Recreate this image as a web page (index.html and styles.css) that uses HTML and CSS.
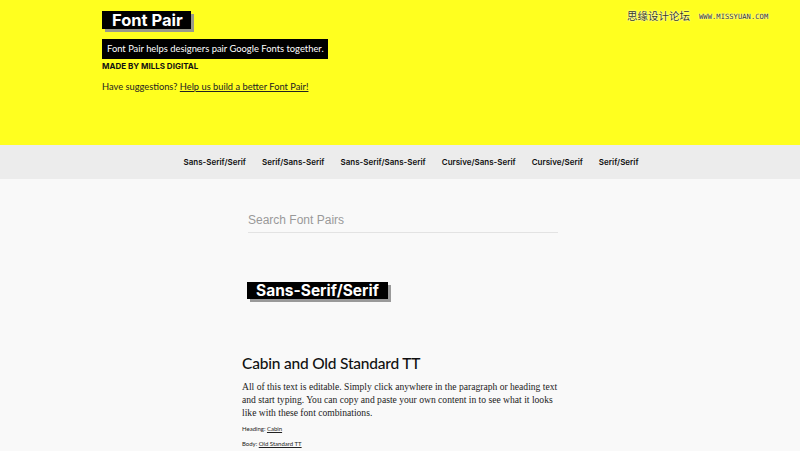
FILE: index.html
```html
<!DOCTYPE html>
<html>
<head>
<meta charset="utf-8">
<link rel="stylesheet" href="styles.css">
</head>
<body>
<header class="hero">
  <div class="hero-inner">
    <h1 class="logo">Font Pair</h1>
    <p class="tagline">Font Pair helps designers pair Google Fonts together.</p>
    <p class="byline">MADE BY MILLS DIGITAL</p>
    <p class="suggest">Have suggestions? <a href="#">Help us build a better Font Pair!</a></p>
  </div>
  <div class="watermark"><span class="wm-cn">思缘设计论坛</span><span class="wm-en">WWW.MISSYUAN.COM</span></div>
</header>
<nav class="nav">
  <a href="#">Sans-Serif/Serif</a>
  <a href="#">Serif/Sans-Serif</a>
  <a href="#">Sans-Serif/Sans-Serif</a>
  <a href="#">Cursive/Sans-Serif</a>
  <a href="#">Cursive/Serif</a>
  <a href="#">Serif/Serif</a>
</nav>
<main class="main">
  <div class="search"><input class="search-input" type="text" placeholder="Search Font Pairs"></div>
  <h2 class="section-title">Sans-Serif/Serif</h2>
  <article class="pair">
    <h3 class="pair-title">Cabin and Old Standard TT</h3>
    <p class="pair-body">All of this text is editable. Simply click anywhere in the paragraph or heading text and start typing. You can copy and paste your own content in to see what it looks like with these font combinations.</p>
    <p class="pair-meta">Heading: <a href="#">Cabin</a></p>
    <p class="pair-meta">Body: <a href="#">Old Standard TT</a></p>
  </article>
</main>
</body>
</html>
```
FILE: styles.css
```css
* { box-sizing: border-box; }
html, body { margin: 0; padding: 0; }
body {
  background: #f9f9f9;
  font-family: Lato, "Open Sans", "Liberation Sans", sans-serif;
  color: #111;
  overflow: hidden;
}
.hero {
  background: #ffff1f;
  height: 145px;
  position: relative;
}
.hero-inner {
  padding: 11px 0 0 102px;
  display: flex;
  flex-direction: column;
  align-items: flex-start;
}
.logo {
  margin: 0;
  background: #000;
  color: #fff;
  font-family: Inter, "DejaVu Sans", sans-serif;
  font-weight: 700;
  font-size: 16.5px;
  line-height: 18px;
  padding: 0 8px 0 10px;
  box-shadow: 3px 3px 0 #9a9a8a;
}
.tagline {
  margin: 10px 0 0;
  background: #000;
  color: #fff;
  font-size: 9.4px;
  line-height: 20px;
  padding: 0 4px 0 5px;
}
.byline {
  margin: 1px 0 0;
  font-family: Inter, "DejaVu Sans", sans-serif;
  font-weight: 700;
  font-size: 8px;
  line-height: 12px;
  color: #111;
}
.suggest {
  margin: 9px 0 0;
  font-size: 9.3px;
  line-height: 12px;
  color: #222;
}
.suggest a { color: #222; }
.watermark {
  position: absolute;
  top: 9px;
  left: 627px;
  display: flex;
  align-items: center;
  gap: 9px;
  color: #3a3a10;
  text-shadow: 0 0 2px #fff, 0 0 1px #fff;
}
.wm-cn { font-family: "Noto Sans CJK SC", sans-serif; font-size: 10.5px; line-height: 14px; }
.wm-en { font-family: "DejaVu Sans Mono", monospace; font-size: 7.2px; letter-spacing: 0; }
.nav {
  background: #ececec;
  height: 34px;
  display: flex;
  justify-content: center;
  align-items: center;
  gap: 16px;
  padding-left: 22px;
}
.nav a {
  font-family: Inter, "DejaVu Sans", sans-serif;
  font-weight: 600;
  font-size: 8px;
  color: #111;
  text-decoration: none;
}
.main {
  width: 316px;
  margin: 0 auto;
  padding-top: 29px;
}
.search { padding-left: 6px; }
.search-input {
  width: 100%;
  border: 0;
  border-bottom: 1px solid #e3e3e3;
  background: transparent;
  font-family: "Liberation Sans", Arial, sans-serif;
  font-size: 12px;
  padding: 4px 0 5px;
  margin: 0;
  outline: none;
}
.search-input::placeholder { color: #999; }
.section-title {
  display: inline-block;
  margin: 49px 0 0 5px;
  background: #000;
  color: #fff;
  font-family: Inter, "DejaVu Sans", sans-serif;
  font-weight: 700;
  font-size: 15.5px;
  line-height: 17px;
  padding: 0 9px 0 9px;
  box-shadow: 3px 3px 0 #9a9a9a;
}
.pair { margin-top: 53px; }
.pair-title {
  margin: 0;
  font-family: Lato, "Open Sans", sans-serif;
  font-weight: 500;
  font-size: 15.5px;
  line-height: 22px;
  letter-spacing: -0.2px;
  color: #111;
}
.pair-body {
  margin: 6px 0 0;
  font-family: "Liberation Serif", "DejaVu Serif", serif;
  font-size: 9.6px;
  line-height: 13px;
  color: #222;
}
.pair-meta {
  margin: 5px 0 0;
  font-size: 6px;
  line-height: 10px;
  color: #222;
}
.pair-meta a { color: #222; }
```
